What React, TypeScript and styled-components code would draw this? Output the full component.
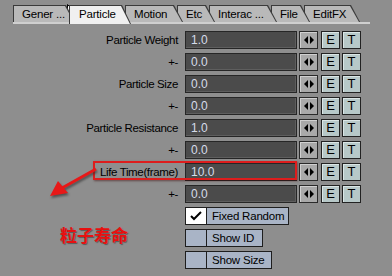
import React from "react";
import styled, { createGlobalStyle } from "styled-components";

const Global = createGlobalStyle`
  html, body { margin: 0; padding: 0; }
  body {
    width: 392px;
    height: 276px;
    overflow: hidden;
    background: #8e8e8e;
    font-family: "Liberation Sans", Arial, sans-serif;
  }
`;

const tabs = [
  { label: "Gener ...", width: 62 },
  { label: "Particle", width: 62, active: true },
  { label: "Motion", width: 58 },
  { label: "Etc", width: 38 },
  { label: "Interac ...", width: 68 },
  { label: "File", width: 39 },
  { label: "EditFX", width: 56 },
];

const rows = [
  { label: "Particle Weight", value: "1.0" },
  { label: "+-", value: "0.0" },
  { label: "Particle Size", value: "0.0" },
  { label: "+-", value: "0.0" },
  { label: "Particle Resistance", value: "1.0" },
  { label: "+-", value: "0.0" },
  { label: "Life Time(frame)", value: "10.0" },
  { label: "+-", value: "0.0" },
];

const toggles = [
  { label: "Fixed Random", checked: true, width: 104 },
  { label: "Show ID", checked: false, width: 78 },
  { label: "Show Size", checked: false, width: 87 },
];

const App = () => {
  return (
    <>
      <Global />
      <S.Panel>
        <S.TabBar>
          {tabs.map((t, i) => (
            <S.Tab key={i} $w={t.width} $active={!!t.active} style={{ zIndex: t.active ? 20 : 10 - i }}>
              <S.TabFace $active={!!t.active}>{t.label}</S.TabFace>
            </S.Tab>
          ))}
        </S.TabBar>

        <S.Form>
          {rows.map((r, i) => (
            <S.Row key={i}>
              <S.Label>{r.label}</S.Label>
              <S.Field>{r.value}</S.Field>
              <S.ArrowBtn>
                <svg width="10" height="8" viewBox="0 0 10 8">
                  <path d="M0 4 L4 0 L4 8 Z M10 4 L6 0 L6 8 Z" fill="#000" />
                </svg>
              </S.ArrowBtn>
              <S.KeyBtn>E</S.KeyBtn>
              <S.KeyBtn>T</S.KeyBtn>
            </S.Row>
          ))}
          {toggles.map((t, i) => (
            <S.Row key={"t" + i}>
              <S.Label />
              <S.Toggle $w={t.width}>
                <S.Check $on={t.checked}>
                  {t.checked && (
                    <svg width="12" height="10" viewBox="0 0 12 10">
                      <path d="M1 5 L4 8 L11 1" stroke="#000" strokeWidth="2" fill="none" />
                    </svg>
                  )}
                </S.Check>
                <S.ToggleText>{t.label}</S.ToggleText>
              </S.Toggle>
            </S.Row>
          ))}
        </S.Form>

        <S.Note>粒子寿命</S.Note>
        <S.Highlight />
        <S.Arrow width="60" height="40" viewBox="0 0 60 40">
          <line x1="50" y1="6" x2="16" y2="25" stroke="#e81818" strokeWidth="3" />
          <path d="M4 33 L12 18 L22 30 Z" fill="#e81818" />
        </S.Arrow>
        <S.Cursor width="13" height="21" viewBox="0 0 13 21">
          <path d="M0.5 0.5 L0.5 16 L4 12.5 L6.8 19 L9 18 L6.3 11.8 L11.5 11.8 Z" fill="#fff" stroke="#000" strokeWidth="1" />
        </S.Cursor>
      </S.Panel>
    </>
  );
};

export default App;

const S = {
  Panel: styled.div`
    position: relative;
    width: 392px;
    height: 276px;
  `,
  TabBar: styled.div`
    display: flex;
    align-items: flex-end;
    height: 21px;
    margin: 0 22px 0 13px;
    padding-top: 1px;
    border-bottom: 2px solid #cfcfcf;
  `,
  Tab: styled.div<{ $w: number; $active: boolean }>`
    position: relative;
    width: ${(p) => p.$w}px;
    height: ${(p) => (p.$active ? 19 : 17)}px;
    margin-right: -6px;
    margin-bottom: ${(p) => (p.$active ? -2 : 0)}px;
    background: #3a3a3a;
    clip-path: polygon(0 0, calc(100% - 9px) 0, 100% 100%, 0 100%);
    padding: 1px 1px 0 1px;
    box-sizing: border-box;
  `,
  TabFace: styled.div<{ $active: boolean }>`
    height: 100%;
    background: ${(p) => (p.$active ? "#f0f0f0" : "#b9b9b9")};
    clip-path: polygon(0 0, calc(100% - 9px) 0, 100% 100%, 0 100%);
    font-size: 11.5px;
    letter-spacing: -0.2px;
    line-height: 16px;
    color: #000;
    padding-left: ${(p) => (p.$active ? 9 : 8)}px;
    white-space: nowrap;
  `,
  Form: styled.div`
    display: flex;
    flex-direction: column;
    gap: 4px;
    margin-top: 7px;
  `,
  Row: styled.div`
    display: flex;
    align-items: center;
    height: 18px;
  `,
  Label: styled.div`
    width: 178px;
    padding-right: 7px;
    text-align: right;
    font-size: 11.5px;
    letter-spacing: -0.35px;
    color: #000;
    white-space: nowrap;
  `,
  Field: styled.div`
    box-sizing: border-box;
    width: 112px;
    height: 18px;
    background: #4b4b4b;
    border: 1px solid #262626;
    box-shadow: inset -1px -1px 0 #5e5e5e;
    color: #d6dcea;
    font-size: 12px;
    line-height: 16px;
    padding-left: 5px;
    margin-right: 2px;
  `,
  ArrowBtn: styled.div`
    box-sizing: border-box;
    width: 19px;
    height: 18px;
    background: #a9a9a9;
    border: 1px solid #2a2a2a;
    box-shadow: inset 1px 1px 0 #d0d0d0;
    display: flex;
    align-items: center;
    justify-content: center;
    margin-right: 3px;
  `,
  KeyBtn: styled.div`
    box-sizing: border-box;
    width: 19px;
    height: 18px;
    background: #b7c8c8;
    border: 1px solid #222;
    box-shadow: inset 1px 1px 0 #dbe6e6;
    font-size: 13px;
    line-height: 16px;
    text-align: center;
    color: #000;
    margin-right: 2px;
  `,
  Toggle: styled.div<{ $w: number }>`
    box-sizing: border-box;
    width: ${(p) => p.$w}px;
    height: 18px;
    display: flex;
    border: 1px solid #1e1e1e;
    background: #a9b4c6;
  `,
  Check: styled.div<{ $on: boolean }>`
    width: 20px;
    height: 100%;
    background: ${(p) => (p.$on ? "#fff" : "#a9b4c6")};
    border-right: 1px solid #1e1e1e;
    display: flex;
    align-items: center;
    justify-content: center;
  `,
  ToggleText: styled.div`
    font-size: 11.5px;
    letter-spacing: -0.2px;
    line-height: 16px;
    padding-left: 5px;
    color: #000;
    white-space: nowrap;
  `,
  Note: styled.div`
    position: absolute;
    left: 60px;
    top: 222px;
    font-family: "Noto Sans CJK SC", sans-serif;
    font-weight: 700;
    font-size: 17px;
    color: #e81010;
    text-shadow: 1px 1px 1px #5a5a5a;
  `,
  Highlight: styled.div`
    position: absolute;
    left: 93px;
    top: 161px;
    width: 204px;
    height: 19px;
    border: 2px solid #dd1d1d;
    box-sizing: border-box;
    box-shadow: 1px 1px 2px rgba(60, 0, 0, 0.5);
  `,
  Arrow: styled.svg`
    position: absolute;
    left: 46px;
    top: 163px;
    filter: drop-shadow(1px 2px 1px rgba(40, 40, 40, 0.6));
  `,
  Cursor: styled.svg`
    position: absolute;
    left: 67px;
    top: 4px;
  `,
};
